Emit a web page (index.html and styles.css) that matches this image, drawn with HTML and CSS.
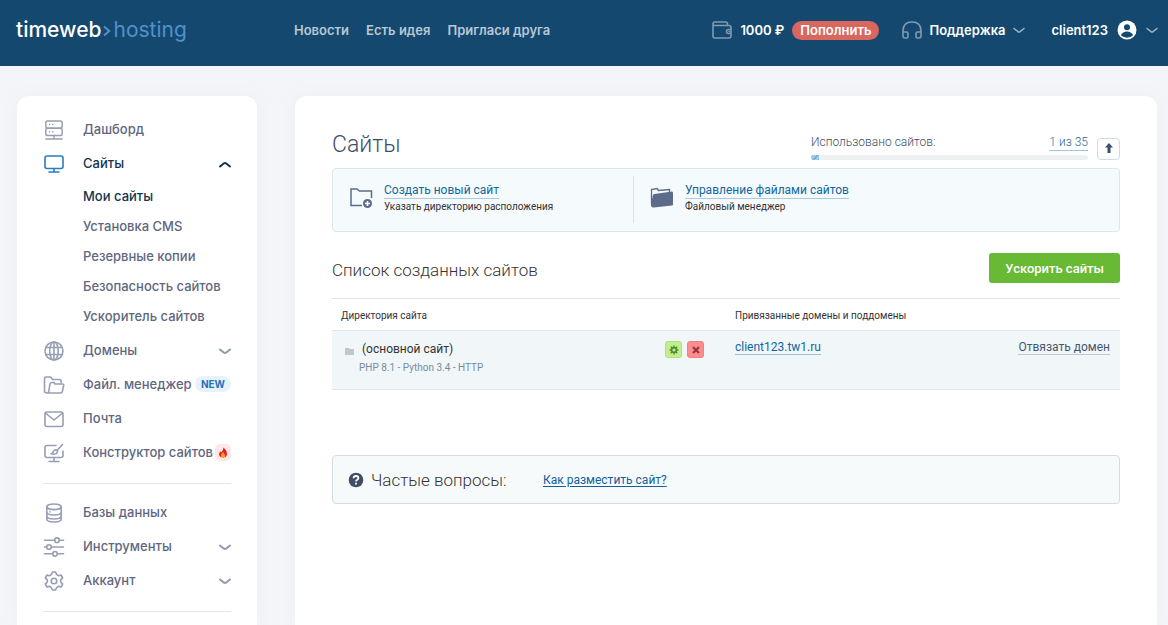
FILE: index.html
```html
<!DOCTYPE html>
<html lang="ru">
<head>
<meta charset="utf-8">
<meta name="viewport" content="width=device-width, initial-scale=1">
<title>Сайты — timeweb hosting</title>
<link rel="stylesheet" href="styles.css">
</head>
<body>
<svg class="defs" aria-hidden="true">
  <symbol id="chevron" viewBox="0 0 12 7"><path d="M1 1.500 5 4.700Q6 5.300 7 4.700L11 1.500"/></symbol>
</svg>
<header class="top">
  <a class="logo" href="#"><span class="logo-main">timeweb</span><svg class="logo-arrow" viewBox="0 0 8 12"><path d="M1 1.500 6.200 6 1 10.500"/></svg><span class="logo-sub">hosting</span></a>
  <nav class="top-nav">
    <a href="#">Новости</a>
    <a href="#">Есть идея</a>
    <a href="#">Пригласи друга</a>
  </nav>
  <div class="account">
    <div class="balance">
      <svg class="head-icon" viewBox="0 0 20 18"><path d="M1 3.500V15Q1 17 3 17H17Q19 17 19 15V6.500Q19 4.500 17 4.500H2.500Q1 4.500 1 3 1 1 3 1H13.500Q15.500 1 15.500 3V4.500M19 8.500H16.500Q14.500 8.500 14.500 10.500T16.500 12.500H19M17 10.500H17.200"/></svg>
      <span>1000 ₽</span>
      <button class="topup" type="button">Пополнить</button>
    </div>
    <button class="menu-btn support" type="button">
      <svg class="head-icon" viewBox="0 0 20 18"><path d="M1 15V10Q1 1 10 1T19 10V15Q19 17 17 17H15.500Q14 17 14 15.500V12.500Q14 11 15.500 11H19M1 11H4.500Q6 11 6 12.500V15.500Q6 17 4.500 17H3Q1 17 1 15"/></svg>
      <span>Поддержка</span>
      <svg class="chev"><use href="#chevron"/></svg>
    </button>
    <button class="menu-btn" type="button">
      <span>client123</span>
      <svg class="avatar" viewBox="0 0 20 20"><circle cx="10" cy="10" r="9.500" fill="#fff"/><circle cx="10" cy="7.300" r="3" fill="#14486f"/><path d="M3.800 15.300Q6 11.600 10 11.600T16.200 15.300Q13.500 17.700 10 17.700T3.800 15.300" fill="#14486f"/></svg>
      <svg class="chev"><use href="#chevron"/></svg>
    </button>
  </div>
</header>
<div class="page">
  <aside class="side">
    <nav>
      <a class="item" href="#"><svg class="icon" viewBox="0 0 20 22"><rect x="1" y="1" width="18" height="8" rx="2"/><rect x="1" y="9" width="18" height="8" rx="2"/><path d="M5 5h.3M8.500 5h.3M5 13h.3M8.500 13h.3M10 17v3.500M1 20.800H19"/></svg><span>Дашборд</span></a>
      <a class="item open" href="#"><svg class="icon" viewBox="0 0 20 20"><rect x="1" y="2" width="18" height="12.500" rx="2"/><path d="M10 14.500V18M5 18H15"/></svg><span>Сайты</span><svg class="chev up"><use href="#chevron"/></svg></a>
      <div class="sub">
        <a class="current" href="#">Мои сайты</a>
        <a href="#">Установка CMS</a>
        <a href="#">Резервные копии</a>
        <a href="#">Безопасность сайтов</a>
        <a href="#">Ускоритель сайтов</a>
      </div>
      <a class="item" href="#"><svg class="icon" viewBox="0 0 20 20"><circle cx="10" cy="10" r="9"/><ellipse cx="10" cy="10" rx="4.300" ry="9"/><path d="M2 6.500H18M2 13.500H18M10 1V19"/></svg><span>Домены</span><svg class="chev"><use href="#chevron"/></svg></a>
      <a class="item" href="#"><svg class="icon" viewBox="0 0 20 20"><path d="M3.500 18H3Q.5 18 .5 16V3.500Q.5 2 2 2H6.500L8.500 4.500H15.500Q17 4.500 17 6V7.500M3.500 18Q4.700 17.500 5 15.500L5.800 9.500Q6 7.500 7.500 7.500H10L11 9H18.500Q20 9 19.700 10.500L18.300 16.500Q18 18 16.500 18H3.500"/></svg><span>Файл. менеджер</span><span class="badge">NEW</span></a>
      <a class="item" href="#"><svg class="icon" viewBox="0 0 20 20"><rect x="1" y="3" width="18" height="14.500" rx="2"/><path d="M2 4.500 10 11 18 4.500"/></svg><span>Почта</span></a>
      <a class="item" href="#"><svg class="icon" viewBox="0 0 20 20"><path d="M12 2.500H3Q1 2.500 1 4.500V12.500Q1 14.500 3 14.500H17Q19 14.500 19 12.500V8M10 14.500V18.500M5 18.500H15M18.500 1.500 13 7.500M7 10.800Q9 10.500 9.700 8.300 10.500 6.500 12.300 7 14 8 13.300 9.700 11.500 12 7 10.800"/></svg><span>Конструктор сайтов</span><span class="fire"><svg viewBox="0 0 10 12"><path d="M5.500.5Q9.500 4 9.300 8 8.800 11.500 5 11.500T.7 8Q.8 6 2.200 4.500L3 6Q5.500 4 5.500.5" fill="#f5141e"/><path d="M5 5.500Q8 8.500 7 10.500 5 12.300 3 10.500 2 8.300 5 5.500" fill="#ff9f1c"/></svg></span></a>
      <hr>
      <a class="item" href="#"><svg class="icon" viewBox="0 0 20 20"><ellipse cx="10" cy="3.800" rx="7.200" ry="2.800"/><path d="M2.800 4V16Q2.800 19 10 19T17.200 16V4M2.800 9Q3 12 10 12T17.200 9M2.800 13Q3 16 10 16T17.200 13M6 8.700V8.900"/></svg><span>Базы данных</span></a>
      <a class="item" href="#"><svg class="icon" viewBox="0 0 20 20"><path d="M.5 3.200H10.700M15.300 3.200H19.500M.5 10H2.700M7.300 10H19.500M.5 16.800H8.700M13.300 16.800H19.500"/><circle cx="13" cy="3.200" r="2.300"/><circle cx="5" cy="10" r="2.300"/><circle cx="11" cy="16.800" r="2.300"/></svg><span>Инструменты</span><svg class="chev"><use href="#chevron"/></svg></a>
      <a class="item" href="#"><svg class="icon" viewBox="0 0 20 20"><path d="M8.500 1H11.500Q12.300 3.800 14 4.500 15 4.900 17 4L18.700 7Q16.500 8.500 16.500 10T18.700 13L17 16Q15 15.100 14 15.500 12.300 16.200 11.500 19H8.500Q7.700 16.200 6 15.500 5 15.100 3 16L1.300 13Q3.500 11.500 3.500 10T1.300 7L3 4Q5 4.900 6 4.500 7.700 3.800 8.500 1Z"/><circle cx="10" cy="10" r="2.800"/></svg><span>Аккаунт</span><svg class="chev"><use href="#chevron"/></svg></a>
      <hr>
    </nav>
  </aside>
  <main class="content">
    <div class="title-row">
      <h1>Сайты</h1>
      <div class="usage">
        <div class="usage-text"><span>Использовано сайтов:</span><a href="#">1 из 35</a></div>
        <div class="bar"><div class="bar-fill"></div></div>
      </div>
      <button class="collapse" type="button" aria-label="Свернуть"><svg viewBox="0 0 8 10"><path d="M4 0 8 4.500H5.500V10H2.500V4.500H0Z" fill="#3d4e68"/></svg></button>
    </div>
    <section class="actions">
      <div class="action">
        <svg class="action-icon" viewBox="0 0 24 24"><path d="M13 19.500H2V3H8L10.500 5H22.500V12" fill="none" stroke="#5d6b8a" stroke-width="1.500"/><circle cx="18.500" cy="17.500" r="4.500" fill="#5d6b8a"/><path d="M18.500 15V20M16 17.500H21" stroke="#fff" stroke-width="1.500"/></svg>
        <div><a href="#">Создать новый сайт</a><p>Указать директорию расположения</p></div>
      </div>
      <div class="action">
        <svg class="action-icon" viewBox="0 0 24 24"><path d="M1.500 18V3.500L7 2.500 8.500 4.500 19.500 3.500V6" fill="none" stroke="#5d6b8a" stroke-width="1.300"/><path d="M1 17.500 3 9Q3.200 8 4.500 7.900L22 5.500Q23 5.500 23 7V18.500Q23 19.500 22 19.500L3.500 21.500Q1 21.500 1 19Z" fill="#5d6b8a"/></svg>
        <div><a href="#">Управление файлами сайтов</a><p>Файловый менеджер</p></div>
      </div>
    </section>
    <div class="list-head">
      <h2>Список созданных сайтов</h2>
      <button class="boost" type="button">Ускорить сайты</button>
    </div>
    <table class="sites">
      <thead><tr><th class="col-dir">Директория сайта</th><th colspan="2">Привязанные домены и поддомены</th></tr></thead>
      <tbody><tr>
        <td>
          <div class="site">
            <svg class="mini-folder" viewBox="0 0 9 7"><path d="M0 0H4L5 1H9V7H0Z" fill="#bfc9cd"/></svg>
            <div class="site-text"><span class="site-name">(основной сайт)</span><span class="site-meta">PHP 8.1 - Python 3.4 - HTTP</span></div>
            <button class="mini settings" type="button" aria-label="Настройки"><svg viewBox="0 0 10 10"><path d="M5 .5V9.500M.5 5H9.500M1.800 1.800 8.200 8.200M8.200 1.800 1.800 8.200" stroke="#4f8a37" stroke-width="1.400"/><circle cx="5" cy="5" r="2.400" fill="#c3ee8d" stroke="#4f8a37" stroke-width="1.600"/></svg></button>
            <button class="mini remove" type="button" aria-label="Удалить"><svg viewBox="0 0 10 10"><path d="M2 2 8 8M8 2 2 8" stroke="#953b41" stroke-width="2.400"/></svg></button>
          </div>
        </td>
        <td><a class="domain" href="#">client123.tw1.ru</a></td>
        <td class="unlink-cell"><a class="unlink" href="#">Отвязать домен</a></td>
      </tr></tbody>
    </table>
    <section class="faq">
      <svg class="faq-icon" viewBox="0 0 16 16"><circle cx="8" cy="8" r="7.300" fill="#3f4d66"/><path d="M5.600 6.300Q5.700 4 8 4T10.400 6Q10.400 7 9.200 7.700 8 8.300 8 9.400M8 10.700V12.500" fill="none" stroke="#fff" stroke-width="1.800"/></svg>
      <h2>Частые вопросы:</h2>
      <a href="#">Как разместить сайт?</a>
    </section>
  </main>
</div>
</body>
</html>
```
FILE: styles.css
```css
* { box-sizing: border-box; }
body {
  margin: 0;
  min-height: 100vh;
  display: flex;
  flex-direction: column;
  background: #f4f5f8;
  font-family: Roboto, "Liberation Sans", sans-serif;
  color: #333;
}
a { color: inherit; text-decoration: none; }
button { font: inherit; color: inherit; border: 0; padding: 0; background: none; cursor: pointer; }
h1, h2, p { margin: 0; font-weight: 300; }
svg { display: block; flex: none; }
.defs { display: none; }

.chev { width: 12px; height: 7px; fill: none; stroke: currentColor; stroke-width: 2; stroke-linecap: round; color: #8d9ab0; }
.chev.up { transform: rotate(180deg); color: #12344d; }

.top {
  height: 66px;
  padding: 0 10px 6px 16px;
  display: flex;
  align-items: center;
  background: #14486f;
  color: #fff;
  font: 600 13px/20px Inter, sans-serif;
}
.logo { width: 278px; display: flex; align-items: center; font: 500 21px/24px Inter, sans-serif; }
.logo-arrow { width: 8px; height: 12px; margin: 2px 2px 0; fill: none; stroke: #5192ca; stroke-width: 2; }
.logo-sub { color: #5192ca; font-weight: 400; }
.top-nav { display: flex; gap: 17px; color: #b9c8d4; }
.account { margin-left: auto; display: flex; align-items: center; }
.head-icon { width: 20px; height: 18px; fill: none; stroke: #7f9bb1; stroke-width: 1.600; stroke-linecap: round; }
.balance { display: flex; align-items: center; gap: 8px; margin-right: 23px; }
.topup { height: 19px; padding: 0 8px; border-radius: 10px; background: #d9675f; line-height: 19px; }
.menu-btn { display: flex; align-items: center; gap: 9px; }
.support { gap: 7px; margin-right: 27px; }
.menu-btn .chev { color: #9cb1c2; stroke-width: 1.600; }
.avatar { width: 20px; height: 20px; }

.page { flex: 1; display: flex; align-items: stretch; gap: 38px; padding: 30px 11px 0 17px; }
.side, .content { background: #fff; border-radius: 12px 12px 0 0; box-shadow: 0 0 24px rgba(40, 50, 80, 0.03); }
.side { width: 240px; flex: none; padding: 17px 26px 0; font: 500 13px/20px Inter, sans-serif; color: #5f6780; }
.item { height: 34px; display: flex; align-items: center; white-space: nowrap; }
.item > span { margin-bottom: 2px; }
.item .icon { width: 22px; height: 20px; margin-right: 18px; fill: none; stroke: #989fb4; stroke-width: 1.600; stroke-linecap: round; stroke-linejoin: round; }
.item .chev { margin-left: auto; }
.item.open { color: #12344d; }
.item.open .icon { stroke: #2b7cbf; }
.sub { padding: 0 0 3px 40px; }
.sub a { display: block; line-height: 30px; white-space: nowrap; }
.sub .current { color: #12344d; }
.badge { margin-left: auto; padding: 0 6px; border-radius: 8px; background: #e9f2fb; color: #2372b9; font-size: 10px; font-weight: 700; line-height: 16px; }
.fire { margin-left: auto; padding: 3px; border-radius: 5px; background: #fde8e8; }
.fire svg { width: 10px; height: 11px; }
.side hr { height: 1px; margin: 13px 0 12px; border: 0; background: #e5e7ea; }

.content { flex: 1; min-width: 0; padding: 36px 37px 0; }
.title-row { display: flex; align-items: flex-start; height: 36px; color: #3d4e68; }
h1 { font-size: 23px; line-height: 26px; flex: 1; }
.usage { width: 277px; }
.usage-text { display: flex; justify-content: space-between; font-size: 12px; line-height: 16px; font-weight: 300; padding-top: 2px; }
.usage-text a { color: #2f6899; border-bottom: 1px solid #9fc6e0; }
.bar { height: 5px; margin-top: 4px; border-radius: 3px; background: #edf1f1; overflow: hidden; }
.bar-fill { width: 8px; height: 5px; background: repeating-linear-gradient(135deg, #76b5d5 0 2px, #9fd0e8 2px 4px); }
.collapse { width: 23px; height: 22px; margin: 6px 0 0 9px; padding-bottom: 2px; display: grid; place-items: center; border: 1px solid #ccdce3; border-radius: 4px; background: #fff; }
.collapse svg { width: 8px; height: 10px; }

.actions { height: 64px; display: flex; border: 1px solid #dae8ec; border-radius: 4px; background: #f5fafd; }
.action { width: 300px; display: flex; gap: 11px; margin: 7px 0 8px; padding: 3px 0 0 16px; }
.action + .action { border-left: 1px solid #d8e3ea; }
.action-icon { width: 24px; height: 24px; margin-top: 7px; }
.action a { display: inline-block; white-space: nowrap; font-size: 12px; line-height: 15px; color: #0f689e; border-bottom: 1px solid #a9cadf; }
.action p { margin-top: 1px; font-size: 10px; line-height: 14px; font-weight: 400; color: #333; }

.list-head { display: flex; justify-content: space-between; align-items: center; margin: 21px 0 15px; }
.list-head h2 { font-size: 17px; line-height: 24px; padding-top: 4px; }
.boost { height: 30px; padding: 0 16px; border-radius: 3px; background: #68b933; color: #fff; font-size: 13px; font-weight: 500; }

.sites { width: 100%; border-collapse: collapse; border-top: 1px solid #dce7ea; text-align: left; }
.sites th { height: 32px; padding: 2px 0 0 9px; font-size: 10px; line-height: 14px; font-weight: 400; }
.col-dir { width: 50%; }
.sites tbody tr { height: 59px; background: #f1f6f9; border-top: 1px solid #dce7ea; border-bottom: 1px solid #dce7ea; }
.sites td { padding: 9px 10px 0 9px; vertical-align: top; font-size: 12px; line-height: 15px; }
.site { display: flex; align-items: flex-start; gap: 5px; padding-right: 12px; }
.mini-folder { width: 9px; height: 7px; margin: 8px 0 0 4px; }
.site-text { flex: 1; display: flex; flex-direction: column; }
.site-name { padding-left: 3px; line-height: 18px; }
.site-meta { font-size: 10px; line-height: 20px; color: #758d9a; }
.mini { width: 17px; height: 17px; margin-top: 1px; display: grid; place-items: center; border-radius: 3px; }
.mini svg { width: 10px; height: 10px; }
.settings { border: 1px solid #b0e272; background: #c3ee8d; }
.remove { border: 1px solid #fb7a7d; background: #ff8c8f; }
.domain { color: #0f689e; border-bottom: 1px solid #97c2de; }
.unlink-cell { text-align: right; }
.unlink { color: #465670; border-bottom: 1px solid #bfc7cf; }

.faq { height: 49px; margin-top: 65px; padding: 0 15px; display: flex; align-items: center; border: 1px solid #cfdfe5; border-radius: 4px; background: #f7fafb; }
.faq-icon { width: 16px; height: 16px; margin-right: 7px; }
.faq h2 { width: 172px; font-size: 17px; line-height: 24px; }
.faq a { font-size: 12px; color: #125f9c; text-decoration: underline; text-underline-offset: 2px; }
```
